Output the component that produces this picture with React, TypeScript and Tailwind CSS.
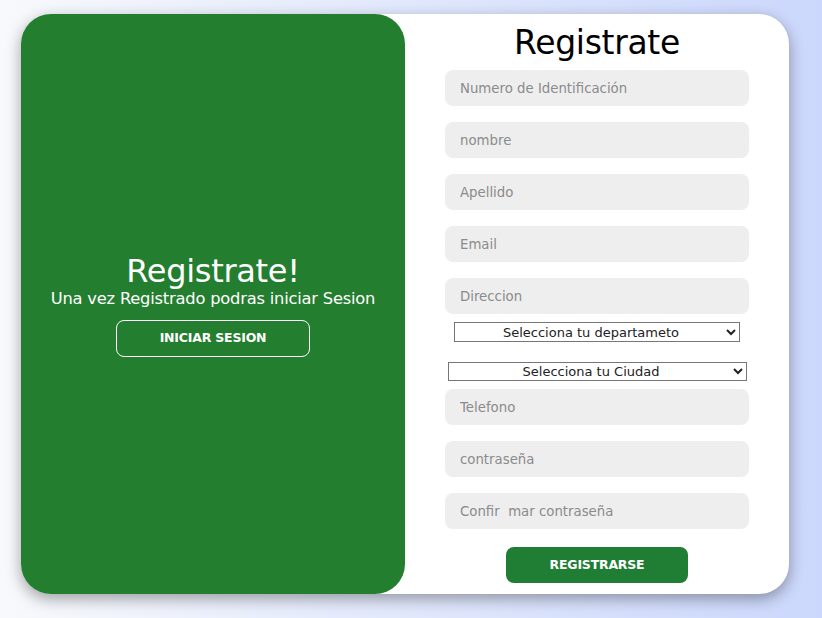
import React from "react";

const font = { fontFamily: '"DejaVu Sans", "Noto Sans", sans-serif' };

const Field = ({ placeholder, className = "" }: { placeholder: string; className?: string }) => (
  <input
    type="text"
    placeholder={placeholder}
    className={
      "h-9 w-[304px] rounded-lg bg-[#eeeeee] px-[15px] text-[13.3px] text-[#333] outline-none placeholder:text-[#8b8b8b] " +
      className
    }
  />
);

export default function App() {
  return (
    <div
      className="flex h-[618px] w-full items-start bg-gradient-to-r from-[#f8f9fc] to-[#cbd7fc] pl-[21px] pt-[14px]"
      style={font}
    >
      <div className="flex h-[580px] w-[768px] rounded-[30px] bg-white shadow-[0_5px_15px_rgba(0,0,0,0.35)]">
        {/* left panel */}
        <div className="flex h-full w-[384px] flex-col items-center justify-center rounded-[30px] bg-[#247e2f] pt-[1px] text-white">
          <h1 className="text-[32px] font-medium leading-[36px] tracking-[-0.3px]">Registrate!</h1>
          <p className="text-[16.3px] leading-[20px] tracking-[-0.2px]">Una vez Registrado podras iniciar Sesion</p>
          <button className="mt-[11px] h-[37px] w-[194px] rounded-lg border border-white text-[12.5px] font-bold tracking-[-0.2px]">
            INICIAR SESION
          </button>
        </div>

        {/* right form */}
        <form className="flex flex-1 flex-col items-center pt-[11px]">
          <h2 className="text-[33px] leading-[36px] tracking-[-0.3px] text-black">Registrate</h2>
          <div className="mt-[9px] flex flex-col gap-4">
            <Field placeholder="Numero de Identificación" />
            <Field placeholder="nombre" />
            <Field placeholder="Apellido" />
            <Field placeholder="Email" />
            <Field placeholder="Direccion" />
          </div>
          <select
            className="mt-2 h-5 w-[286px] border border-[#767676] bg-white text-[13px] font-normal text-[#222] [text-align-last:center]"
            defaultValue=""
          >
            <option value="">Selecciona tu departameto</option>
          </select>
          <select
            className="mt-5 h-[19px] w-[299px] border border-[#767676] bg-white text-[13px] font-normal text-[#222] [text-align-last:center]"
            defaultValue=""
          >
            <option value="">Selecciona tu Ciudad</option>
          </select>
          <div className="mt-2 flex flex-col gap-4">
            <Field placeholder="Telefono" />
            <Field placeholder="contraseña" />
            <Field placeholder="Confir  mar contraseña" />
          </div>
          <button
            type="button"
            className="mt-[18px] h-9 w-[182px] rounded-lg bg-[#207d34] text-[12.5px] font-bold tracking-[-0.2px] text-white"
          >
            REGISTRARSE
          </button>
        </form>
      </div>
    </div>
  );
}
